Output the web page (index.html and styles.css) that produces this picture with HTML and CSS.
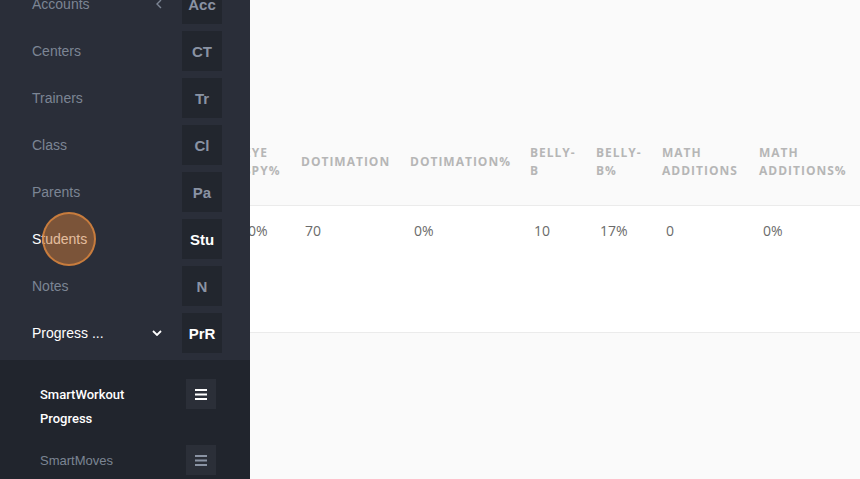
FILE: index.html
```html
<!DOCTYPE html>
<html lang="en">
<head>
  <meta charset="UTF-8">
  <meta name="viewport" content="width=device-width, initial-scale=1.0">
  <title>SmartWorkout Progress</title>
  <link rel="stylesheet" href="styles.css">
</head>
<body>
  <div class="layout">
    <aside class="sidebar">
      <ul class="nav">
        <li class="nav-item">
          <span class="nav-label">Accounts</span>
          <svg class="chevron" width="6" height="10" viewBox="0 0 6 10"><path d="M5 1 L1 5 L5 9" fill="none" stroke="#7c8594" stroke-width="1.4"/></svg>
          <span class="nav-badge">Acc</span>
        </li>
        <li class="nav-item">
          <span class="nav-label">Centers</span>
          <span class="nav-badge">CT</span>
        </li>
        <li class="nav-item">
          <span class="nav-label">Trainers</span>
          <span class="nav-badge">Tr</span>
        </li>
        <li class="nav-item">
          <span class="nav-label">Class</span>
          <span class="nav-badge">Cl</span>
        </li>
        <li class="nav-item">
          <span class="nav-label">Parents</span>
          <span class="nav-badge">Pa</span>
        </li>
        <li class="nav-item active">
          <span class="nav-label">Students</span>
          <span class="nav-badge">Stu</span>
          <span class="click-ring"></span>
        </li>
        <li class="nav-item">
          <span class="nav-label">Notes</span>
          <span class="nav-badge">N</span>
        </li>
        <li class="nav-item active">
          <span class="nav-label">Progress ...</span>
          <svg class="chevron" width="10" height="6" viewBox="0 0 10 6"><path d="M1 1 L5 5 L9 1" fill="none" stroke="#ffffff" stroke-width="1.8"/></svg>
          <span class="nav-badge">PrR</span>
        </li>
      </ul>

      <ul class="subnav">
        <li class="sub-item active">
          <span class="sub-label">SmartWorkout Progress</span>
          <span class="sub-icon">
            <svg width="12" height="11" viewBox="0 0 12 11"><rect y="0" width="12" height="2" fill="#fff"/><rect y="4.5" width="12" height="2" fill="#fff"/><rect y="9" width="12" height="2" fill="#fff"/></svg>
          </span>
        </li>
        <li class="sub-item">
          <span class="sub-label">SmartMoves</span>
          <span class="sub-icon">
            <svg width="12" height="11" viewBox="0 0 12 11"><rect y="0" width="12" height="2" fill="#8a93a3"/><rect y="4.5" width="12" height="2" fill="#8a93a3"/><rect y="9" width="12" height="2" fill="#8a93a3"/></svg>
          </span>
        </li>
      </ul>
    </aside>

    <main class="content">
      <table class="data-table">
        <colgroup>
          <col style="width: 57px">
          <col style="width: 109px">
          <col style="width: 120px">
          <col style="width: 66px">
          <col style="width: 66px">
          <col style="width: 97px">
          <col style="width: 110px">
        </colgroup>
        <thead>
          <tr>
            <th>Eye Spy%</th>
            <th>Dotimation</th>
            <th>Dotimation%</th>
            <th>Belly-B</th>
            <th>Belly-B%</th>
            <th>Math Additions</th>
            <th>Math Additions%</th>
          </tr>
        </thead>
        <tbody>
          <tr>
            <td>0%</td>
            <td>70</td>
            <td>0%</td>
            <td>10</td>
            <td>17%</td>
            <td>0</td>
            <td>0%</td>
          </tr>
        </tbody>
      </table>
    </main>
  </div>
</body>
</html>
```

FILE: styles.css
```css
/* Reset */
html, body {
  margin: 0;
  padding: 0;
  height: 100%;
  overflow: hidden;
  font-family: 'Liberation Sans', Arial, sans-serif;
}

ul {
  list-style: none;
  margin: 0;
  padding: 0;
}

.layout {
  display: flex;
  height: 100vh;
}

/* Sidebar */
.sidebar {
  width: 250px;
  flex-shrink: 0;
  display: flex;
  flex-direction: column;
  background-color: #2a2e39;
  overflow: hidden;
}

.nav {
  margin-top: -16px; /* list is scrolled a little */
}

.nav-item {
  position: relative;
  display: flex;
  align-items: center;
  height: 40px;
  margin-bottom: 7px;
  padding: 0 28px 0 32px;
  font-size: 14px;
  color: #7c8594;
}

.nav-label {
  flex: 1;
}

.chevron {
  margin-right: 20px;
}

.nav-badge {
  width: 40px;
  height: 40px;
  display: flex;
  align-items: center;
  justify-content: center;
  background-color: #22262e;
  font-weight: bold;
  font-size: 15px;
  color: #8a93a4;
}

.nav-item.active,
.nav-item.active .nav-badge {
  color: #fff;
}

/* touch indicator over the clicked item */
.click-ring {
  position: absolute;
  left: 42px;
  top: -7px;
  width: 50px;
  height: 50px;
  border-radius: 50%;
  background-color: rgba(204, 122, 58, 0.5);
  border: 2px solid rgba(214, 132, 62, 0.85);
}

.subnav {
  flex: 1;
  background-color: #21252d;
  padding: 19px 34px 0 40px;
}

.sub-item {
  display: flex;
  align-items: flex-start;
  margin-bottom: 14px;
  font-size: 13px;
  color: #7c8594;
}

.sub-label {
  flex: 1;
  margin-top: 4px;
  line-height: 24px;
  padding-right: 30px;
}

.sub-item.active .sub-label {
  color: #fff;
  font-family: Roboto, sans-serif;
  font-weight: 500;
}

.sub-icon {
  width: 30px;
  height: 30px;
  display: flex;
  align-items: center;
  justify-content: center;
  background-color: #2b2f38;
}

/* Main content */
.content {
  flex: 1;
  overflow: hidden;
  background-color: #fafafa;
  padding-top: 120px;
}

.data-table {
  margin-left: -6px;
  border-collapse: collapse;
  table-layout: fixed;
  width: 625px;
}

.data-table th {
  padding: 24px 14px 25px 0;
  text-align: left;
  vertical-align: middle;
  font-family: 'Open Sans', sans-serif;
  font-size: 12px;
  font-weight: bold;
  line-height: 18px;
  letter-spacing: 1px;
  text-transform: uppercase;
  color: #b6b6b6;
  border-bottom: 1px solid #ebebeb;
}

.data-table tbody tr {
  background-color: #fff;
}

.data-table td {
  box-sizing: border-box;
  height: 127px;
  padding: 15px 10px 0 4px;
  vertical-align: top;
  font-family: 'Open Sans', sans-serif;
  font-size: 14px;
  line-height: 20px;
  color: #6b6b6b;
  border-bottom: 1px solid #ebebeb;
}
```
